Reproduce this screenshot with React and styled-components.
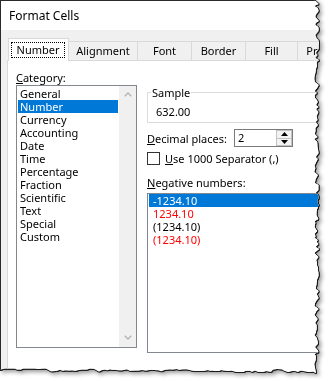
import React from 'react';
import styled, { createGlobalStyle } from 'styled-components';

const FONT = `"Segoe UI", "Noto Sans", "Open Sans", sans-serif`;

const GlobalStyle = createGlobalStyle`
  html, body { margin: 0; padding: 0; background: #fff; }
  body { font-family: ${FONT}; font-size: 11px; color: #000; }
  * { box-sizing: border-box; }
`;

function makeEdge() {
  let seed = 12345;
  const rnd = () => {
    seed = (seed * 16807) % 2147483647;
    return (seed - 1) / 2147483646;
  };
  const pts = [];
  for (let y = 0; y < 368; y += 2 + Math.floor(rnd() * 3)) {
    pts.push([316.5 + (rnd() - 0.5) * 5, y]);
  }
  pts.push([316, 373]);
  let level = 370;
  for (let x = 313; x > 0; x -= 2 + Math.floor(rnd() * 4)) {
    if (rnd() < 0.25) level = 368.5 + rnd() * 4;
    pts.push([x, level + (rnd() - 0.5) * 1.6]);
  }
  pts.push([0, 370]);
  return `polygon(0px 0px, ${pts
    .map(([x, y]) => `${x.toFixed(1)}px ${y.toFixed(1)}px`)
    .join(', ')})`;
}

const EDGE = makeEdge();

const Frame = styled.div`
  width: 329px;
  height: 381px;
  filter: drop-shadow(1px 0 0 #1c1c1c) drop-shadow(0 1px 0 #1c1c1c)
    drop-shadow(2px 2px 2px rgba(0, 0, 0, 0.4));
`;

const Window = styled.div`
  width: 329px;
  height: 381px;
  background: #f0f0f0;
  border-left: 1px solid #2a2a2a;
  border-top: 1px solid #2a2a2a;
  display: flex;
  flex-direction: column;
  overflow: hidden;
  clip-path: ${EDGE};
`;

const TitleBar = styled.div`
  height: 29px;
  flex: none;
  background: #fff;
  display: flex;
  align-items: center;
  padding-left: 8px;
  font-size: 12px;
`;

const Body = styled.div`
  flex: 1;
  display: flex;
  flex-direction: column;
  padding: 8px 0 0 6px;
  min-height: 0;
`;

const TabRow = styled.div`
  height: 22px;
  flex: none;
  display: flex;
  align-items: flex-end;
  padding-left: 1px;
  position: relative;
  z-index: 1;
  white-space: nowrap;
`;

const Tab = styled.div`
  flex: none;
  width: ${(p) => p.$w}px;
  height: ${(p) => (p.$active ? 23 : 19)}px;
  margin-bottom: ${(p) => (p.$active ? -1 : 0)}px;
  margin-left: ${(p) => (p.$first ? 0 : -1)}px;
  padding-top: ${(p) => (p.$active ? 3 : 1)}px;
  background: ${(p) => (p.$active ? '#fff' : '#f0f0f0')};
  border: 1px solid #d9d9d9;
  border-bottom: none;
  text-align: center;
  line-height: 16px;
  position: relative;
  z-index: ${(p) => (p.$active ? 2 : 1)};
`;

const FocusRing = styled.div`
  height: 16px;
  margin: 0 3px 0 2px;
  border: 1px dotted #000;
  line-height: 14px;
`;

const Panel = styled.div`
  flex: 1;
  background: #fff;
  border: 1px solid #d9d9d9;
  display: flex;
  gap: 10px;
  padding: 9px 0 0 8px;
  min-height: 0;
`;

const LeftCol = styled.div`
  width: 121px;
  flex: none;
  display: flex;
  flex-direction: column;
`;

const RightCol = styled.div`
  flex: 1;
  display: flex;
  flex-direction: column;
  min-width: 0;
`;

const FieldLabel = styled.div`
  line-height: 15px;
  height: 15px;
  margin-top: ${(p) => p.$mt || 0}px;
  white-space: nowrap;
  flex: none;
`;

const ListBox = styled.div`
  height: ${(p) => p.$h}px;
  margin-top: ${(p) => p.$mt || 0}px;
  border: 1px solid #828790;
  display: flex;
  flex: none;
  background: #fff;
`;

const Items = styled.div`
  flex: 1;
  padding: ${(p) => (p.$pad ? '1px' : '0 1px')};
  min-width: 0;
`;

const Item = styled.div`
  height: 13px;
  line-height: 13px;
  padding-left: ${(p) => p.$indent}px;
  white-space: nowrap;
  background: ${(p) => (p.$sel ? '#0078d7' : 'transparent')};
  color: ${(p) => (p.$sel ? '#fff' : p.$red ? '#ff0000' : '#000')};
`;

const ScrollBar = styled.div`
  width: 17px;
  flex: none;
  background: #f0f0f0;
  display: flex;
  flex-direction: column;
  justify-content: space-between;
  align-items: center;
  padding: 6px 0 7px;
`;

const Group = styled.fieldset`
  margin: 15px 0 0 0;
  padding: 4px 8px 3px 8px;
  border: 1px solid #dcdcdc;
  min-width: 0;
  flex: none;
`;

const Legend = styled.legend`
  padding: 0 1px;
  margin-left: -5px;
  line-height: 15px;
`;

const SampleValue = styled.div`
  line-height: 15px;
`;

const Row = styled.div`
  display: flex;
  align-items: center;
  height: ${(p) => p.$h}px;
  margin-top: ${(p) => p.$mt}px;
  flex: none;
  white-space: nowrap;
`;

const RowLabel = styled.div`
  width: ${(p) => (p.$w ? `${p.$w}px` : 'auto')};
  margin-left: ${(p) => p.$ml || 0}px;
`;

const SpinBox = styled.div`
  width: 59px;
  height: 18px;
  border: 1px solid #7a7a7a;
  display: flex;
  background: #fff;
`;

const SpinValue = styled.div`
  flex: 1;
  padding-left: 3px;
  line-height: 16px;
`;

const Spinner = styled.div`
  width: 16px;
  display: flex;
  flex-direction: column;
`;

const SpinButton = styled.div`
  flex: 1;
  background: #f3f3f3;
  border: 1px solid #c2c2c2;
  margin-top: ${(p) => (p.$down ? -1 : 0)}px;
  display: flex;
  align-items: center;
  justify-content: center;
`;

const CheckBox = styled.div`
  width: 13px;
  height: 13px;
  border: 1px solid #333;
  background: #fff;
  flex: none;
`;

const Chevron = ({ up }) => (
  <svg width="8" height="5" viewBox="0 0 8 5">
    <polyline
      points={up ? '0.8,4.2 4,1 7.2,4.2' : '0.8,0.8 4,4 7.2,0.8'}
      fill="none"
      stroke="#b4b4b4"
      strokeWidth="1.3"
    />
  </svg>
);

const Triangle = ({ up }) => (
  <svg width="7" height="4" viewBox="0 0 7 4">
    <polygon points={up ? '0,4 3.5,0 7,4' : '0,0 3.5,4 7,0'} fill="#000" />
  </svg>
);

const tabs = [
  { label: 'Number', w: 61 },
  { label: 'Alignment', w: 70 },
  { label: 'Font', w: 55 },
  { label: 'Border', w: 55 },
  { label: 'Fill', w: 53 },
  { label: 'Protection', w: 72 },
];

const categories = [
  'General',
  'Number',
  'Currency',
  'Accounting',
  'Date',
  'Time',
  'Percentage',
  'Fraction',
  'Scientific',
  'Text',
  'Special',
  'Custom',
];

const negatives = [
  { text: '-1234.10', red: false },
  { text: '1234.10', red: true },
  { text: '(1234.10)', red: false },
  { text: '(1234.10)', red: true },
];

export default function App() {
  return (
    <>
      <GlobalStyle />
      <Frame>
        <Window>
          <TitleBar>Format Cells</TitleBar>
          <Body>
            <TabRow>
              {tabs.map((t, i) => (
                <Tab key={t.label} $w={t.w} $active={i === 0} $first={i === 0}>
                  {i === 0 ? <FocusRing>{t.label}</FocusRing> : t.label}
                </Tab>
              ))}
            </TabRow>
            <Panel>
              <LeftCol>
                <FieldLabel>
                  <u>C</u>ategory:
                </FieldLabel>
                <ListBox $h={263}>
                  <Items $pad>
                    {categories.map((c) => (
                      <Item key={c} $indent={2} $sel={c === 'Number'}>
                        {c}
                      </Item>
                    ))}
                  </Items>
                  <ScrollBar>
                    <Chevron up />
                    <Chevron />
                  </ScrollBar>
                </ListBox>
              </LeftCol>
              <RightCol>
                <Group>
                  <Legend>Sample</Legend>
                  <SampleValue>632.00</SampleValue>
                </Group>
                <Row $h={18} $mt={6}>
                  <RowLabel $w={87}>
                    <u>D</u>ecimal places:
                  </RowLabel>
                  <SpinBox>
                    <SpinValue>2</SpinValue>
                    <Spinner>
                      <SpinButton>
                        <Triangle up />
                      </SpinButton>
                      <SpinButton $down>
                        <Triangle />
                      </SpinButton>
                    </Spinner>
                  </SpinBox>
                </Row>
                <Row $h={13} $mt={5}>
                  <CheckBox />
                  <RowLabel $ml={5}>
                    <u>U</u>se 1000 Separator (,)
                  </RowLabel>
                </Row>
                <FieldLabel $mt={10}>
                  <u>N</u>egative numbers:
                </FieldLabel>
                <ListBox $h={160} $mt={3}>
                  <Items>
                    {negatives.map((n, i) => (
                      <Item key={i} $indent={4} $sel={i === 0} $red={n.red}>
                        {n.text}
                      </Item>
                    ))}
                  </Items>
                </ListBox>
              </RightCol>
            </Panel>
          </Body>
        </Window>
      </Frame>
    </>
  );
}
